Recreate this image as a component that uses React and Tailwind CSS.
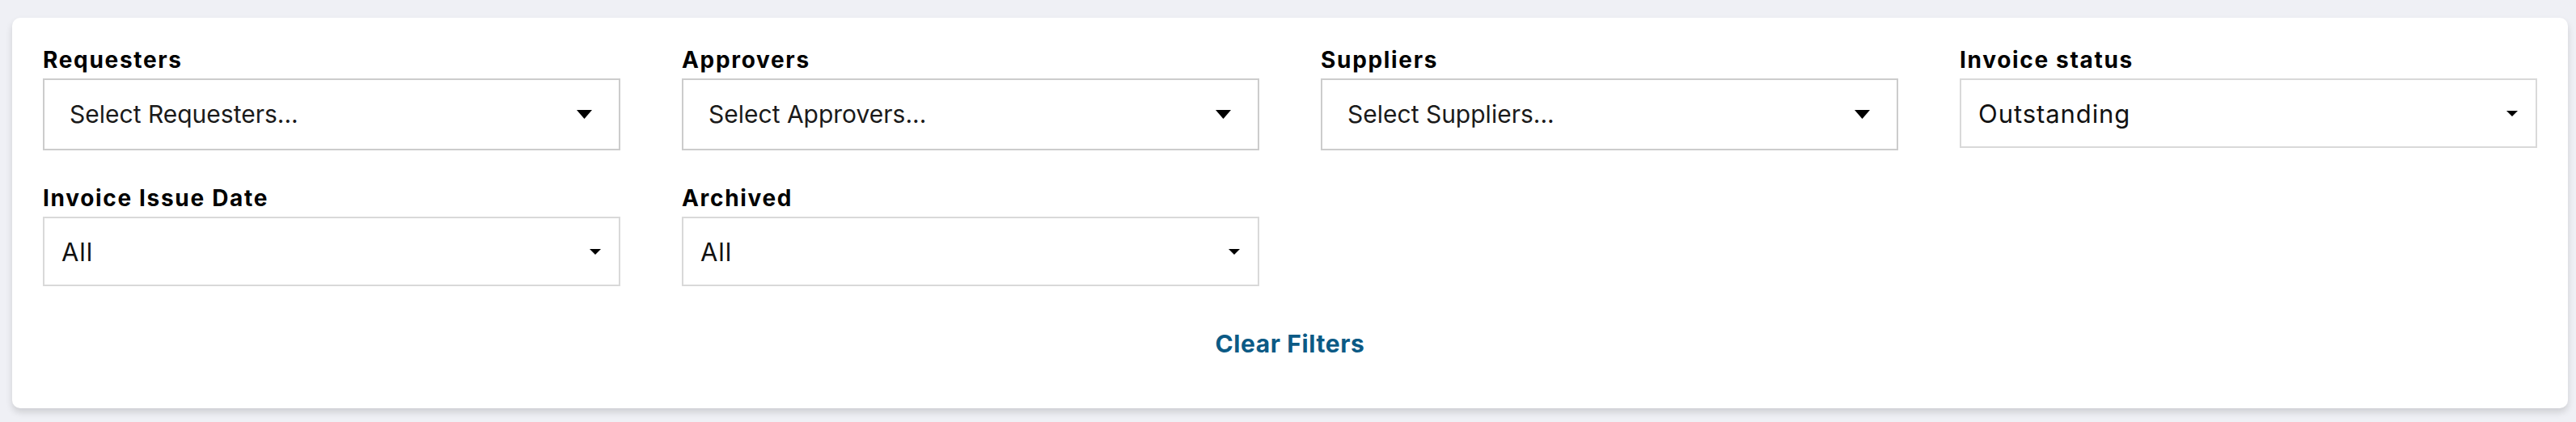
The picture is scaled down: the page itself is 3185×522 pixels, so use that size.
const FIELDS_TOP = [
  { label: "Requesters", value: "Select Requesters...", kind: "multi" },
  { label: "Approvers", value: "Select Approvers...", kind: "multi" },
  { label: "Suppliers", value: "Select Suppliers...", kind: "multi" },
  { label: "Invoice status", value: "Outstanding", kind: "native" },
];

const FIELDS_BOTTOM = [
  { label: "Invoice Issue Date", value: "All", kind: "native" },
  { label: "Archived", value: "All", kind: "native" },
];

function Caret({ big }) {
  if (big) {
    return (
      <svg width="19" height="11" viewBox="0 0 19 11" className="shrink-0">
        <path d="M0 0 H19 L9.5 11 Z" fill="#000" />
      </svg>
    );
  }
  return (
    <svg width="14" height="7" viewBox="0 0 14 7" className="shrink-0">
      <path d="M0 0 H14 L7 7 Z" fill="#000" />
    </svg>
  );
}

function Field({ label, value, kind }) {
  const multi = kind === "multi";
  return (
    <div className="flex flex-col">
      <label className="mb-[7px] block text-[28px] leading-[32px] font-bold tracking-[0.06em] text-black">
        {label}
      </label>
      {multi ? (
        <div className="flex h-[89px] items-center justify-between border-2 border-[#cccccc] bg-white pl-[31px] pr-[33px]">
          <span className="text-[30px] text-[#1a1a1a]">{value}</span>
          <Caret big />
        </div>
      ) : (
        <div className="flex h-[86px] items-center justify-between border-2 border-[#d9d9d9] bg-white pl-[21px] pr-[22px]">
          <span className="pt-[3px] text-[31px] tracking-[0.03em] text-[#111111]">
            {value}
          </span>
          <Caret />
        </div>
      )}
    </div>
  );
}

export default function App() {
  return (
    <div
      className="min-h-screen bg-[#eff0f5] pt-[22px] pl-[15px] pr-[10px]"
      style={{ fontFamily: "Inter, 'Noto Sans', sans-serif" }}
    >
      <div className="rounded-[10px] bg-white px-[38px] pt-[36px] pb-[62px] shadow-[0_5px_8px_rgba(0,0,0,0.14)]">
        <div className="grid grid-cols-4 gap-x-[76px] gap-y-[43px]">
          {FIELDS_TOP.map((f) => (
            <Field key={f.label} {...f} />
          ))}
          {FIELDS_BOTTOM.map((f) => (
            <Field key={f.label} {...f} />
          ))}
        </div>

        <div className="mt-[53px] text-center">
          <button className="text-[30px] leading-[36px] font-bold tracking-[0.02em] text-[#0b5a85]">
            Clear Filters
          </button>
        </div>
      </div>
    </div>
  );
}
